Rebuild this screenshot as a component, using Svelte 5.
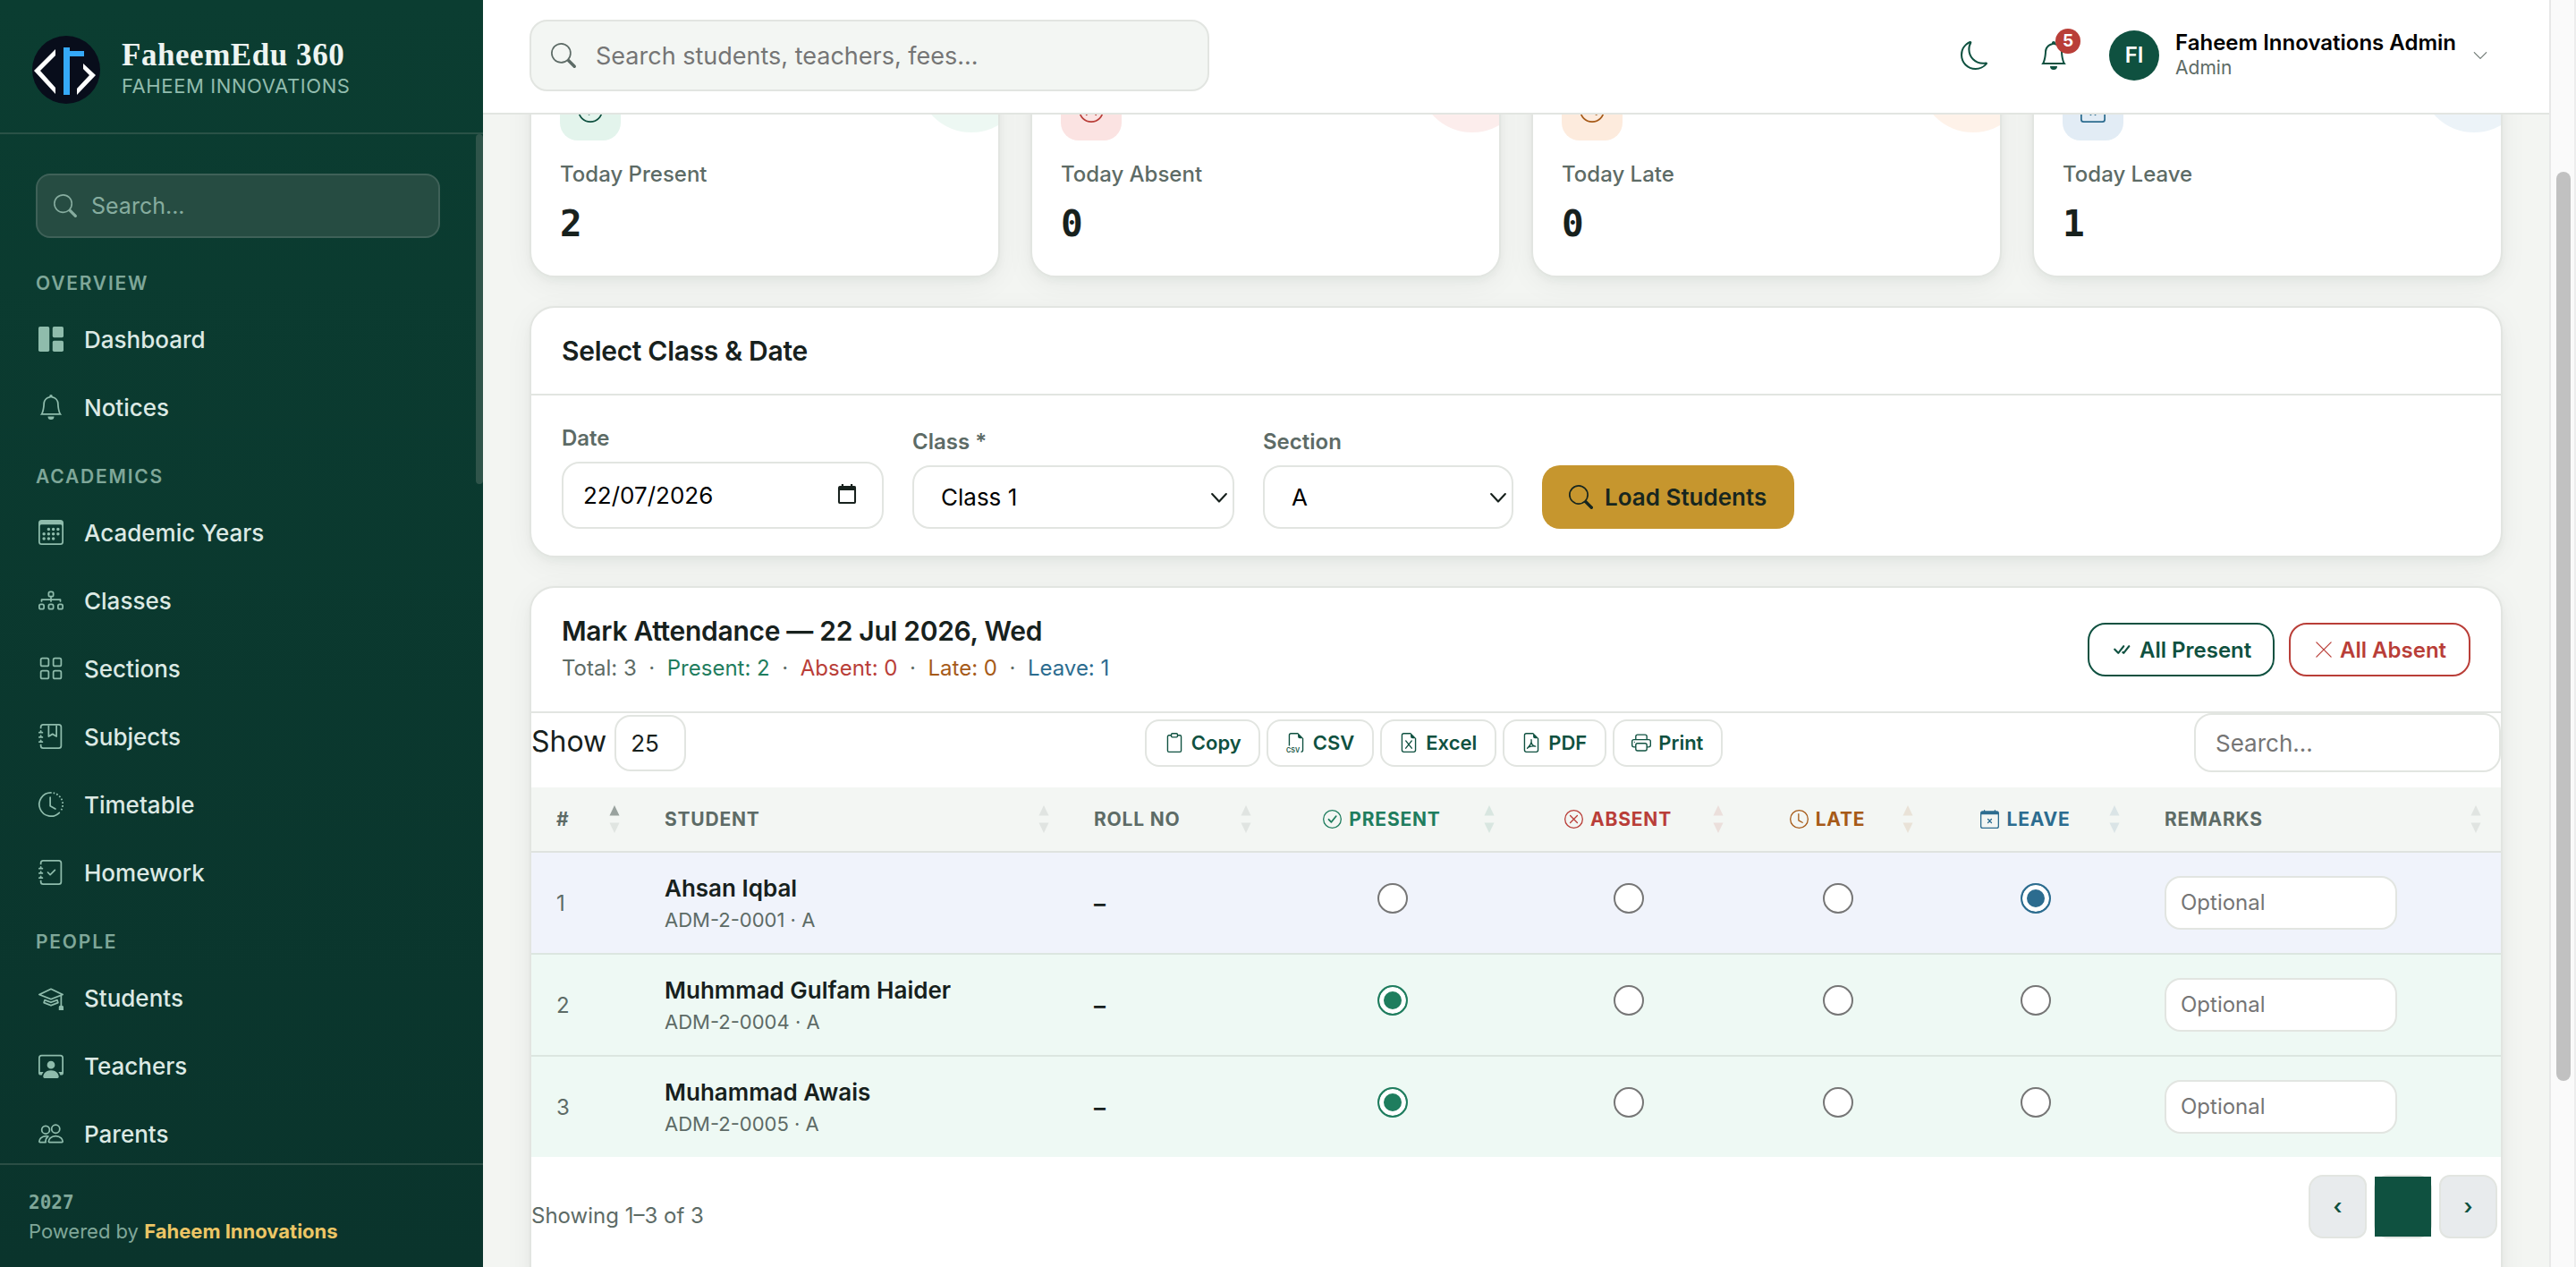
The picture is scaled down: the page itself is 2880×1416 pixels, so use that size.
<script>
  // icon bodies, all on a 16x16 grid
  const file = '<path d="M14 14V4.5L9.5 0H4a2 2 0 0 0-2 2v12a2 2 0 0 0 2 2h8a2 2 0 0 0 2-2M9.5 3A1.5 1.5 0 0 0 11 4.5h2V14a1 1 0 0 1-1 1H4a1 1 0 0 1-1-1V2a1 1 0 0 1 1-1h5.5z"/>';
  const journal = '<path d="M3 0h10a2 2 0 0 1 2 2v12a2 2 0 0 1-2 2H3a2 2 0 0 1-2-2v-1h1v1a1 1 0 0 0 1 1h10a1 1 0 0 0 1-1V2a1 1 0 0 0-1-1H3a1 1 0 0 0-1 1v1H1V2a2 2 0 0 1 2-2"/><path d="M1 5v-.5a.5.5 0 0 1 1 0V5h.5a.5.5 0 0 1 0 1h-2a.5.5 0 0 1 0-1zm0 3v-.5a.5.5 0 0 1 1 0V8h.5a.5.5 0 0 1 0 1h-2a.5.5 0 0 1 0-1zm0 3v-.5a.5.5 0 0 1 1 0v.5h.5a.5.5 0 0 1 0 1h-2a.5.5 0 0 1 0-1z"/>';
  const line = 'fill="none" stroke="currentColor" stroke-linecap="round" stroke-linejoin="round"';

  const icons = {
    search: '<path d="M11.742 10.344a6.5 6.5 0 1 0-1.397 1.398h-.001q.044.06.098.115l3.85 3.85a1 1 0 0 0 1.415-1.414l-3.85-3.85a1 1 0 0 0-.115-.1zM12 6.5a5.5 5.5 0 1 1-11 0 5.5 5.5 0 0 1 11 0"/>',
    bell: '<path d="M8 16a2 2 0 0 0 2-2H6a2 2 0 0 0 2 2M8 1.918l-.797.161A4 4 0 0 0 4 6c0 .628-.134 2.197-.459 3.742-.16.767-.376 1.566-.663 2.258h10.244c-.287-.692-.502-1.49-.663-2.258C12.134 8.197 12 6.628 12 6a4 4 0 0 0-3.203-3.92zM14.22 12c.223.447.481.801.78 1H1c.299-.199.557-.553.78-1C2.68 10.2 3 6.88 3 6c0-2.42 1.72-4.44 4.005-4.901a1 1 0 1 1 1.99 0A5 5 0 0 1 13 6c0 .88.32 4.2 1.22 6"/>',
    dashboard: '<rect width="7" height="16" rx="1"/><rect x="9" width="7" height="7" rx="1"/><rect x="9" y="9" width="7" height="7" rx="1"/>',
    calendar: '<path d="M14 0H2a2 2 0 0 0-2 2v12a2 2 0 0 0 2 2h12a2 2 0 0 0 2-2V2a2 2 0 0 0-2-2M1 3.857C1 3.384 1.448 3 2 3h12c.552 0 1 .384 1 .857v10.286c0 .473-.448.857-1 .857H2c-.552 0-1-.384-1-.857z"/><path d="M6.5 7a1 1 0 1 0 0-2 1 1 0 0 0 0 2m3 0a1 1 0 1 0 0-2 1 1 0 0 0 0 2m3 0a1 1 0 1 0 0-2 1 1 0 0 0 0 2m-9 3a1 1 0 1 0 0-2 1 1 0 0 0 0 2m3 0a1 1 0 1 0 0-2 1 1 0 0 0 0 2m3 0a1 1 0 1 0 0-2 1 1 0 0 0 0 2m3 0a1 1 0 1 0 0-2 1 1 0 0 0 0 2m-9 3a1 1 0 1 0 0-2 1 1 0 0 0 0 2m3 0a1 1 0 1 0 0-2 1 1 0 0 0 0 2m3 0a1 1 0 1 0 0-2 1 1 0 0 0 0 2"/>',
    diagram: `<g ${line}><rect x="6.5" y="2.5" width="3" height="3" rx="1"/><rect x=".5" y="10.5" width="3" height="3" rx="1"/><rect x="6.5" y="10.5" width="3" height="3" rx="1"/><rect x="12.5" y="10.5" width="3" height="3" rx="1"/><path d="M8 5.5v3M2 8.5v-1h12v1"/></g>`,
    grid: `<g ${line}><rect x="1.5" y="1.5" width="5" height="5" rx="1"/><rect x="9.5" y="1.5" width="5" height="5" rx="1"/><rect x="1.5" y="9.5" width="5" height="5" rx="1"/><rect x="9.5" y="9.5" width="5" height="5" rx="1"/></g>`,
    bookmark: journal + '<path d="M6 8V1h1v6.117L8.743 6.07a.5.5 0 0 1 .514 0L11 7.117V1h1v7a.5.5 0 0 1-.757.429L9 7.083 6.757 8.43A.5.5 0 0 1 6 8"/>',
    homework: journal + '<path d="M10.854 6.146a.5.5 0 0 1 0 .708l-3 3a.5.5 0 0 1-.708 0l-1.5-1.5a.5.5 0 1 1 .708-.708L7.5 8.793l2.646-2.647a.5.5 0 0 1 .708 0"/>',
    history: `<g ${line}><path d="M8 .5A7.5 7.5 0 1 0 13.3 13.3M7.5 3.5V9l3.3 1.9"/><path d="M9.5.65A7.5 7.5 0 0 1 14.3 12.1" stroke-dasharray="1 1.15" stroke-linecap="butt"/></g>`,
    students: '<path d="M8.211 2.047a.5.5 0 0 0-.422 0l-7.5 3.5a.5.5 0 0 0 .025.917l7.5 3a.5.5 0 0 0 .372 0L14 7.14V13a1 1 0 0 0-1 1v2h3v-2a1 1 0 0 0-1-1V6.739l.686-.275a.5.5 0 0 0 .025-.917zM8 8.46 1.758 5.965 8 3.052l6.242 2.913z"/><path d="M4.176 9.032a.5.5 0 0 0-.656.327l-.5 1.7a.5.5 0 0 0 .294.605l4.5 1.8a.5.5 0 0 0 .372 0l4.5-1.8a.5.5 0 0 0 .294-.605l-.5-1.7a.5.5 0 0 0-.656-.327L8 10.466zm-.068 1.873.22-.748 3.496 1.311a.5.5 0 0 0 .352 0l3.496-1.311.22.748L8 12.46z"/>',
    teachers: '<path d="M4 16s-1 0-1-1 1-4 5-4 5 3 5 4-1 1-1 1zm4-5.95a2.5 2.5 0 1 0 0-5 2.5 2.5 0 0 0 0 5"/><path d="M2 1a2 2 0 0 0-2 2v9.5A1.5 1.5 0 0 0 1.5 14h.653a5.4 5.4 0 0 1 1.066-2H1V3a1 1 0 0 1 1-1h12a1 1 0 0 1 1 1v9h-2.219c.554.654.89 1.373 1.066 2h.653a1.5 1.5 0 0 0 1.5-1.5V3a2 2 0 0 0-2-2z"/>',
    parents: `<g ${line}><circle cx="11" cy="5" r="2.6"/><path d="M7 13.5c-.4 0-.5-.2-.5-.5 0-1.2 1.3-3.5 4.5-3.5s4.5 2.3 4.5 3.5c0 .3-.1.5-.5.5z"/><circle cx="4.6" cy="5.5" r="2.5"/><path d="M4.6 13.5H1c-.4 0-.5-.2-.5-.5 0-1.2 1.2-3.5 4.5-3.5.6 0 1 .1 1.2.2-1.2.9-1.9 2.3-1.6 3.8z"/></g>`,
    moon: '<path d="M6 .278a.77.77 0 0 1 .08.858 7.2 7.2 0 0 0-.878 3.46c0 4.021 3.278 7.277 7.318 7.277q.792-.001 1.533-.16a.79.79 0 0 1 .81.316.73.73 0 0 1-.031.893A8.35 8.35 0 0 1 8.344 16C3.734 16 0 12.286 0 7.71 0 4.266 2.114 1.312 5.124.06A.75.75 0 0 1 6 .278M4.858 1.311A7.27 7.27 0 0 0 1.025 7.71c0 4.02 3.279 7.276 7.319 7.276a7.32 7.32 0 0 0 5.205-2.162q-.506.063-1.029.063c-4.61 0-8.343-3.714-8.343-8.29 0-1.167.242-2.278.681-3.286"/>',
    down: `<path ${line} d="m2 5 6 6 6-6"/>`,
    caret: `<path ${line} stroke-width="1.9" d="m1 4.5 7 7.5 7-7.5"/>`,
    date: '<path fill-rule="evenodd" d="M3.5 0h1.6v1.5h5.8V0h1.6v1.5H14A1.3 1.3 0 0 1 15.3 3v11.5A1.5 1.5 0 0 1 14 16H2A1.5 1.5 0 0 1 .7 14.5V3A1.5 1.5 0 0 1 2 1.5h1.5zM2.2 5v9.5h11.6V5z"/>',
    copy: `<g ${line}><path d="M5 2H3.5A1 1 0 0 0 2.5 3v11.5a1 1 0 0 0 1 1h9a1 1 0 0 0 1-1V3a1 1 0 0 0-1-1H11"/><rect x="5.5" y=".5" width="5" height="3" rx=".8"/></g>`,
    csv: '<path d="M14 4.5V14a2 2 0 0 1-2 2v-1a1 1 0 0 0 1-1V4.5h-2A1.5 1.5 0 0 1 9.5 3V1H4a1 1 0 0 0-1 1v8.5H2V2a2 2 0 0 1 2-2h5.5z"/><text x="0" y="15.9" font-family="Inter, sans-serif" font-size="5.2" font-weight="600">CSV</text>',
    excel: file + `<path ${line} d="m5.6 6.5 4.8 6M10.4 6.5l-4.8 6"/>`,
    pdf: file + `<path ${line} d="M8 5.6c.5 2.2-.8 4.7-3.2 7M8 7.5c.4 1.9 1.5 3.2 3.4 3.5-1.8-.4-3.6-.1-5.4.6"/>`,
    print: '<path d="M2.5 8a.5.5 0 1 0 0-1 .5.5 0 0 0 0 1"/><path d="M5 1a2 2 0 0 0-2 2v2H2a2 2 0 0 0-2 2v3a2 2 0 0 0 2 2h1v1a2 2 0 0 0 2 2h6a2 2 0 0 0 2-2v-1h1a2 2 0 0 0 2-2V7a2 2 0 0 0-2-2h-1V3a2 2 0 0 0-2-2zM4 3a1 1 0 0 1 1-1h6a1 1 0 0 1 1 1v2H4zm1 5a2 2 0 0 0-2 2v1H2a1 1 0 0 1-1-1V7a1 1 0 0 1 1-1h12a1 1 0 0 1 1 1v3a1 1 0 0 1-1 1h-1v-1a2 2 0 0 0-2-2zm7 2v3a1 1 0 0 1-1 1H5a1 1 0 0 1-1-1v-3a1 1 0 0 1 1-1h6a1 1 0 0 1 1 1"/>',
    checkAll: '<path d="M8.97 4.97a.75.75 0 0 1 1.07 1.05l-3.99 4.99a.75.75 0 0 1-1.08.02L2.324 8.384a.75.75 0 1 1 1.06-1.06l2.094 2.093L8.95 4.992zm-.92 5.14.92.92a.75.75 0 0 0 1.079-.02l3.992-4.99a.75.75 0 1 0-1.091-1.028L9.477 9.417l-.485-.486z"/>',
    x: `<path ${line} d="M1.5 1.5l13 13M14.5 1.5l-13 13"/>`,
    present: `<g ${line}><circle cx="8" cy="8" r="7.5"/><path stroke-width="1.4" d="m5 8.2 2.2 2.3 4-5"/></g>`,
    absent: `<g ${line}><circle cx="8" cy="8" r="7.5"/><path d="m5 5 6 6M11 5l-6 6"/></g>`,
    late: `<g ${line}><circle cx="8" cy="8" r="7.5"/><path d="M7.5 3.5V9l3.3 1.9"/></g>`,
    leave: `<path fill-rule="evenodd" d="M3.5 0a.5.5 0 0 1 .5.5V1h8V.5a.5.5 0 0 1 1 0V1h1a2 2 0 0 1 2 2v11a2 2 0 0 1-2 2H2a2 2 0 0 1-2-2V3a2 2 0 0 1 2-2h1V.5a.5.5 0 0 1 .5-.5M1 4v10a1 1 0 0 0 1 1h12a1 1 0 0 0 1-1V4z"/><path ${line} d="m6.5 8 3 3M9.5 8l-3 3"/>`,
  };

  const menu = [
    { title: 'Overview', items: [['dashboard', 'Dashboard'], ['bell', 'Notices']] },
    {
      title: 'Academics',
      items: [
        ['calendar', 'Academic Years'],
        ['diagram', 'Classes'],
        ['grid', 'Sections'],
        ['bookmark', 'Subjects'],
        ['history', 'Timetable'],
        ['homework', 'Homework'],
      ],
    },
    { title: 'People', items: [['students', 'Students'], ['teachers', 'Teachers'], ['parents', 'Parents']] },
  ];

  const stats = [
    { kind: 'present', label: 'Today Present', value: 2 },
    { kind: 'absent', label: 'Today Absent', value: 0 },
    { kind: 'late', label: 'Today Late', value: 0 },
    { kind: 'leave', label: 'Today Leave', value: 1 },
  ];

  const exports = [['copy', 'Copy'], ['csv', 'CSV'], ['excel', 'Excel'], ['pdf', 'PDF'], ['print', 'Print']];
  const statuses = ['present', 'absent', 'late', 'leave'];

  let students = $state([
    { name: 'Ahsan Iqbal', adm: 'ADM-2-0001', section: 'A', status: 'leave' },
    { name: 'Muhmmad Gulfam Haider', adm: 'ADM-2-0004', section: 'A', status: 'present' },
    { name: 'Muhammad Awais', adm: 'ADM-2-0005', section: 'A', status: 'present' },
  ]);

  const count = (status) => students.filter((s) => s.status === status).length;

  function markAll(status) {
    for (const s of students) s.status = status;
  }
</script>

{#snippet icon(name)}
  <svg class="icon" viewBox="0 0 16 16" fill="currentColor">{@html icons[name]}</svg>
{/snippet}

{#snippet sort(active)}
  <svg class="sort" class:active viewBox="0 0 12 32" fill="currentColor">
    <path class="up" d="M6 0l5.5 11.5H.5z" />
    <path class="dn" d="M6 31L.5 19.5h11z" />
  </svg>
{/snippet}

<div class="app">
  <aside>
    <div class="brand">
      <svg class="logo" viewBox="0 0 76 76">
        <circle cx="38" cy="38" r="38" fill="#080d1b" />
        <path d="M26 15v7L9 39l17 19v7L2 39z" fill="#fff" />
        <path d="M35 13h7v4h16v6H42v43h-7z" fill="#35a9f8" />
        <path d="M57 31l14 13-21 22v-7l14-15-7-7z" fill="#fff" />
      </svg>
      <div>
        <div class="brand-name">FaheemEdu 360</div>
        <div class="brand-sub">FAHEEM INNOVATIONS</div>
      </div>
    </div>
    <div class="nav-wrap">
      <nav>
        <label class="side-search">
          {@render icon('search')}
          <input placeholder="Search..." />
        </label>
        {#each menu as group}
          <h6>{group.title}</h6>
          {#each group.items as [name, label]}
            <a href="#{name}">{@render icon(name)}<span>{label}</span></a>
          {/each}
        {/each}
      </nav>
      <div class="nav-thumb"></div>
    </div>
    <div class="side-foot">
      <div class="year">2027</div>
      <div>Powered by <strong>Faheem Innovations</strong></div>
    </div>
  </aside>

  <div class="page">
    <header>
      <label class="top-search">
        {@render icon('search')}
        <input placeholder="Search students, teachers, fees..." />
      </label>
      <div class="moon">{@render icon('moon')}</div>
      <div class="notif">{@render icon('bell')}<span class="badge">5</span></div>
      <div class="avatar">FI</div>
      <div class="user">
        <div class="user-name">Faheem Innovations Admin</div>
        <div class="user-role">Admin</div>
      </div>
      <div class="chev">{@render icon('down')}</div>
    </header>

    <main>
      <div class="stats">
        {#each stats as s}
          <div class="stat {s.kind}">
            <div class="stat-icon">{@render icon(s.kind)}</div>
            <div class="stat-label">{s.label}</div>
            <div class="stat-value">{s.value}</div>
          </div>
        {/each}
      </div>

      <section class="card filter">
        <h2>Select Class &amp; Date</h2>
        <div class="fields">
          <div class="field">
            <span>Date</span>
            <label class="control date"><input value="22/07/2026" />{@render icon('date')}</label>
          </div>
          <div class="field">
            <span>Class *</span>
            <label class="control pick"><select><option>Class 1</option></select>{@render icon('caret')}</label>
          </div>
          <div class="field small">
            <span>Section</span>
            <label class="control pick"><select><option>A</option></select>{@render icon('caret')}</label>
          </div>
          <button class="load">{@render icon('search')}Load Students</button>
        </div>
      </section>

      <section class="card marks">
        <div class="marks-head">
          <div>
            <h3>Mark Attendance — 22 Jul 2026, Wed</h3>
            <div class="totals">
              <span>Total: {students.length}</span><i>·</i>
              <span class="c-present">Present: {count('present')}</span><i>·</i>
              <span class="c-absent">Absent: {count('absent')}</span><i>·</i>
              <span class="c-late">Late: {count('late')}</span><i>·</i>
              <span class="c-leave">Leave: {count('leave')}</span>
            </div>
          </div>
          <div class="bulk">
            <button class="all-present" onclick={() => markAll('present')}>{@render icon('checkAll')}All Present</button>
            <button class="all-absent" onclick={() => markAll('absent')}>{@render icon('x')}All Absent</button>
          </div>
        </div>

        <div class="tools">
          <div class="show">Show <span class="len">25</span></div>
          <div class="exports">
            {#each exports as [name, label]}
              <button>{@render icon(name)}{label}</button>
            {/each}
          </div>
          <div class="find"><input placeholder="Search..." /></div>
        </div>

        <table>
          <colgroup>
            <col class="w-num" /><col class="w-student" /><col class="w-roll" /><col class="w-present" />
            <col class="w-absent" /><col class="w-late" /><col class="w-leave" /><col />
          </colgroup>
          <thead>
            <tr>
              <th><div class="th"><span>#</span>{@render sort(true)}</div></th>
              <th><div class="th"><span>Student</span>{@render sort(false)}</div></th>
              <th><div class="th"><span>Roll No</span>{@render sort(false)}</div></th>
              {#each statuses as status}
                <th>
                  <div class="th mid c-{status}"><span>{@render icon(status)}{status}</span>{@render sort(false)}</div>
                </th>
              {/each}
              <th><div class="th"><span>Remarks</span>{@render sort(false)}</div></th>
            </tr>
          </thead>
          <tbody>
            {#each students as s, i}
              <tr class="row-{s.status}">
                <td class="num">{i + 1}</td>
                <td>
                  <div class="name">{s.name}</div>
                  <div class="adm">{s.adm} · {s.section}</div>
                </td>
                <td class="roll">–</td>
                {#each statuses as status}
                  <td class="radio c-{status}">
                    <input type="radio" name="st{i}" value={status} bind:group={s.status} />
                  </td>
                {/each}
                <td><input class="remark" placeholder="Optional" /></td>
              </tr>
            {/each}
          </tbody>
        </table>

        <div class="table-foot">
          <div>Showing 1–3 of 3</div>
          <div class="pager">
            <span class="pg prev">‹</span>
            <span class="pg cur"><b></b></span>
            <span class="pg next">›</span>
          </div>
        </div>
      </section>
    </main>
  </div>

  <div class="scrollbar"><div class="thumb"></div></div>
</div>

<style>
  :global(body) {
    margin: 0;
    overflow: hidden;
  }

  .app {
    display: flex;
    width: 2880px;
    height: 1416px;
    overflow: hidden;
    background: #f3f5f2;
    color: #17211d;
    font-family: Inter, "Liberation Sans", sans-serif;
    font-size: 26px;
  }

  .app * {
    box-sizing: border-box;
  }

  .icon {
    display: block;
    flex: none;
    width: 28px;
    height: 28px;
    overflow: visible;
  }

  input,
  select,
  button {
    font-family: inherit;
    margin: 0;
  }

  label input,
  select {
    flex: 1;
    min-width: 0;
    padding: 0;
    border: 0;
    outline: none;
    background: none;
    appearance: none;
  }

  /* sidebar */
  aside {
    display: flex;
    flex-direction: column;
    flex: none;
    width: 540px;
    background: linear-gradient(180deg, #0b3d31, #0a342c);
    color: #dce9e4;
  }

  .brand {
    display: flex;
    gap: 24px;
    height: 150px;
    padding: 40px 36px 0;
    border-bottom: 2px solid #2a5247;
  }

  .logo {
    width: 76px;
    height: 76px;
  }

  .brand-name {
    margin-top: 3px;
    font-family: "Liberation Serif", serif;
    font-size: 35px;
    font-weight: 700;
    line-height: 38px;
    letter-spacing: 0.55px;
    color: #eef4f1;
  }

  .brand-sub {
    margin-top: 1px;
    font-size: 22px;
    line-height: 28px;
    letter-spacing: 0.6px;
    color: #92bcae;
  }

  .nav-wrap {
    display: flex;
    flex: 1;
    min-height: 0;
    overflow: hidden;
  }

  nav {
    flex: 1;
    min-width: 0;
    padding: 44px 40px 0;
  }

  .nav-thumb {
    flex: none;
    width: 8px;
    height: 391px;
    border-radius: 4px;
    background: #2f544a;
  }

  .side-search {
    display: flex;
    align-items: center;
    gap: 16px;
    height: 72px;
    padding: 0 18px;
    border: 2px solid #3f6158;
    border-radius: 16px;
    background: #264c42;
    color: #86ac9f;
  }

  .side-search .icon {
    width: 26px;
    height: 26px;
  }

  .side-search input {
    font-size: 25px;
    color: #fff;
  }

  .side-search input::placeholder {
    color: #86ac9f;
    opacity: 1;
  }

  h6 {
    margin: 0;
    padding-top: 39px;
    height: 75px;
    font-size: 21px;
    font-weight: 600;
    line-height: 24px;
    letter-spacing: 1.8px;
    text-transform: uppercase;
    color: #7fa799;
  }

  h6:not(:nth-child(2)) {
    height: 64px;
    padding-top: 28px;
  }

  a {
    display: flex;
    align-items: center;
    gap: 23px;
    height: 76px;
    padding-left: 3px;
    font-size: 26px;
    font-weight: 500;
    color: #dce9e4;
    text-decoration: none;
  }

  a .icon {
    color: #8fbcac;
  }

  .side-foot {
    height: 116px;
    padding: 26px 32px 0;
    border-top: 2px solid #2b4e45;
    font-size: 22px;
    line-height: 32px;
    color: #80a799;
  }

  .year {
    font-family: "DejaVu Sans Mono", monospace;
    font-size: 21px;
    font-weight: 700;
  }

  .side-foot strong {
    font-weight: 700;
    color: #ecc565;
  }

  /* top bar */
  .page {
    display: flex;
    flex-direction: column;
    flex: none;
    width: 2310px;
    height: 1416px;
    overflow: hidden;
  }

  header {
    display: flex;
    flex: none;
    align-items: center;
    height: 128px;
    padding: 0 68px 2px 52px;
    border-bottom: 2px solid #e2e5e1;
    background: #fff;
    color: #0f5140;
  }

  .top-search {
    display: flex;
    align-items: center;
    gap: 22px;
    width: 760px;
    height: 80px;
    margin-right: auto;
    padding: 0 22px;
    border: 2px solid #e2e5e1;
    border-radius: 20px;
    background: #f3f6f3;
    color: #5d6b66;
  }

  .top-search input {
    font-size: 27px;
  }

  .top-search input::placeholder {
    color: #757575;
  }

  .moon .icon,
  .notif .icon {
    width: 32px;
    height: 32px;
  }

  .notif {
    position: relative;
    margin: 0 46px 0 56px;
  }

  .badge {
    position: absolute;
    top: -14px;
    right: -14px;
    width: 28px;
    height: 28px;
    border-radius: 50%;
    background: #b93e38;
    color: #fff;
    font-size: 19px;
    font-weight: 700;
    line-height: 28px;
    text-align: center;
  }

  .avatar {
    width: 56px;
    height: 56px;
    margin-right: 18px;
    border-radius: 50%;
    background: #0f5140;
    color: #fff;
    font-size: 24px;
    font-weight: 600;
    line-height: 56px;
    text-align: center;
  }

  .user-name {
    font-size: 24px;
    font-weight: 600;
    line-height: 30px;
    color: #000;
  }

  .user-role {
    font-size: 21px;
    line-height: 26px;
    margin-bottom: 2px;
    color: #5d6b66;
  }

  .chev {
    margin-left: 18px;
    color: #6c7672;
  }

  .chev .icon {
    width: 18px;
    height: 18px;
  }

  main {
    flex: 1;
    min-height: 0;
    padding: 0 52px;
    overflow: hidden;
  }

  /* stat cards, scrolled partly under the top bar */
  .stats {
    display: grid;
    grid-template-columns: repeat(4, 1fr);
    gap: 34px;
    margin-top: -74px;
  }

  .stat {
    position: relative;
    height: 256px;
    padding: 33px 32px;
    border: 2px solid #e2e5e1;
    border-radius: 28px;
    background: #fff;
    box-shadow: 0 4px 8px rgba(16, 40, 30, 0.04), 0 8px 32px rgba(16, 40, 30, 0.05);
    overflow: hidden;
  }

  .stat::after {
    content: "";
    position: absolute;
    top: -28px;
    right: -30px;
    width: 120px;
    height: 120px;
    border-radius: 50%;
    background: var(--soft);
    opacity: 0.65;
  }

  .stat-icon {
    display: grid;
    place-items: center;
    width: 68px;
    height: 68px;
    border-radius: 20px;
    background: var(--soft);
    color: var(--tone);
  }

  .stat.present { --soft: #e3f4ec; --tone: #0f5140; }
  .stat.absent { --soft: #fbe3e2; --tone: #b93e38; }
  .stat.late { --soft: #fdebdd; --tone: #a65a18; }
  .stat.leave { --soft: #e2ecf5; --tone: #2c6c8f; }

  .stat-label {
    margin-top: 22px;
    font-size: 24px;
    font-weight: 500;
    line-height: 32px;
    color: #5d6b66;
  }

  .stat-value {
    margin-top: 13px;
    font-family: "DejaVu Sans Mono", monospace;
    font-size: 41px;
    font-weight: 700;
    line-height: 52px;
  }

  .card {
    border: 2px solid #e2e5e1;
    border-radius: 28px;
    background: #fff;
    box-shadow: 0 4px 8px rgba(16, 40, 30, 0.04), 0 8px 32px rgba(16, 40, 30, 0.05);
  }

  .filter {
    height: 281px;
    margin-top: 32px;
  }

  h2,
  h3 {
    margin: 0;
    font-size: 30px;
    font-weight: 600;
    letter-spacing: -0.3px;
  }

  h2 {
    height: 98px;
    padding-left: 34px;
    border-bottom: 2px solid #e2e5e1;
    line-height: 97px;
  }

  .fields {
    display: flex;
    align-items: flex-end;
    gap: 32px;
    height: 149px;
    padding: 0 34px;
  }

  .field {
    width: 360px;
  }

  .field.small {
    width: 280px;
  }

  .field span {
    display: block;
    margin-bottom: 10px;
    font-size: 24px;
    font-weight: 600;
    line-height: 32px;
    color: #5d6b66;
  }

  .control {
    display: flex;
    align-items: center;
    height: 71px;
    border: 2px solid #e2e5e1;
    border-radius: 20px;
    background: #fff;
  }

  .control input,
  .control select {
    font-size: 26px;
    color: #000;
  }

  .date {
    height: 75px;
    padding: 0 28px 0 22px;
  }

  .date .icon {
    width: 22px;
    height: 22px;
    margin-bottom: 4px;
  }

  .pick {
    padding: 0 6px 0 30px;
  }

  .pick .icon {
    width: 18px;
    height: 18px;
  }

  button {
    display: flex;
    align-items: center;
    background: #fff;
    font-weight: 600;
  }

  .load {
    gap: 13px;
    width: 282px;
    height: 71px;
    padding: 0 30px;
    border: 0;
    border-radius: 20px;
    background: #c6962e;
    color: #17261f;
    font-size: 26px;
    white-space: nowrap;
  }

  .load .icon {
    width: 27px;
    height: 27px;
  }

  .marks {
    height: 800px;
    margin-top: 32px;
  }

  .marks-head {
    display: flex;
    align-items: center;
    justify-content: space-between;
    height: 140px;
    padding: 0 34px;
    border-bottom: 2px solid #e2e5e1;
  }

  .marks-head h3 {
    line-height: 41px;
  }

  .totals {
    display: flex;
    font-size: 24px;
    line-height: 41px;
    color: #5d6b66;
  }

  .totals i {
    width: 34px;
    font-style: normal;
    text-align: center;
  }

  .c-present { --tone: #1f7d5e; color: #1f7d5e; }
  .c-absent { --tone: #b93e38; color: #b93e38; }
  .c-late { --tone: #a65a18; color: #a65a18; }
  .c-leave { --tone: #2c6c8f; color: #2c6c8f; }

  .bulk {
    display: flex;
    gap: 16px;
  }

  .bulk button {
    gap: 8px;
    height: 60px;
    border: 2px solid;
    border-radius: 20px;
    font-size: 24px;
    white-space: nowrap;
  }

  .all-present {
    width: 209px;
    padding: 0 0 0 24px;
    color: #0f5140;
  }

  .all-absent {
    width: 203px;
    padding: 0 0 0 27px;
    color: #b93e38;
  }

  .bulk .icon {
    width: 24px;
    height: 24px;
  }

  .all-absent .icon {
    width: 20px;
    height: 20px;
  }

  .tools {
    display: flex;
    align-items: flex-start;
    justify-content: space-between;
    height: 83px;
  }

  .show {
    display: flex;
    gap: 9px;
    padding-top: 2px;
    font-size: 32px;
    line-height: 60px;
  }

  .len {
    width: 80px;
    height: 63px;
    padding-left: 16px;
    border: 2px solid #e2e5e1;
    border-radius: 18px;
    font-size: 26px;
    line-height: 59px;
  }

  .exports {
    display: flex;
    gap: 7px;
    padding-top: 7px;
    margin-right: 14px;
  }

  .exports button {
    gap: 8px;
    height: 53px;
    padding: 0 19.5px 1px;
    border: 2px solid #e2e5e1;
    border-radius: 16px;
    color: #0f5140;
    font-size: 22px;
  }

  .exports .icon {
    width: 22px;
    height: 22px;
  }

  .find input {
    display: block;
    width: 343px;
    height: 66px;
    padding: 0 22px;
    border: 2px solid #e2e5e1;
    border-radius: 20px;
    font-size: 26px;
  }

  table {
    width: 100%;
    border-collapse: separate;
    border-spacing: 0;
    table-layout: fixed;
  }

  .w-num { width: 121px; }
  .w-student { width: 480px; }
  .w-roll { width: 226px; }
  .w-present { width: 272px; }
  .w-absent { width: 256px; }
  .w-late { width: 212px; }
  .w-leave { width: 231px; }

  th {
    height: 73px;
    padding: 0 22px 0 28px;
    border-bottom: 2px solid #dfe3df;
    background: #f3f6f3;
    color: #5d6b66;
    text-align: left;
  }

  .th {
    display: flex;
    align-items: center;
    justify-content: space-between;
    font-size: 21px;
    font-weight: 700;
    letter-spacing: 0.8px;
    text-transform: uppercase;
  }

  .th span {
    display: flex;
    align-items: center;
    gap: 8px;
  }

  .mid span {
    margin: 0 auto;
    transform: translateX(-9px);
  }

  .th .icon {
    width: 21px;
    height: 21px;
  }

  .sort {
    flex: none;
    width: 12px;
    height: 32px;
    opacity: 0.12;
  }

  .sort.active {
    opacity: 1;
  }

  .sort.active .up {
    opacity: 0.6;
  }

  .sort.active .dn {
    opacity: 0.12;
  }

  td {
    height: 114px;
    padding: 0 28px;
    border-bottom: 2px solid #dce6e0;
  }

  tbody tr:last-child td {
    height: 112px;
    border-bottom: 0;
  }

  .row-present { background: #eef9f4; }
  .row-leave { background: #f0f3fb; }
  .row-absent { background: #fcf0ef; }
  .row-late { background: #fdf5ec; }

  .num {
    font-size: 24px;
    color: #5d6b66;
  }

  .name {
    padding-top: 1px;
    font-weight: 600;
    line-height: 36px;
  }

  .adm {
    font-size: 22px;
    line-height: 34px;
    color: #5d6b66;
  }

  .roll {
    font-weight: 600;
  }

  .radio {
    text-align: center;
  }

  .radio.c-leave {
    padding-right: 29px;
  }

  .radio input {
    display: block;
    width: 34px;
    height: 34px;
    margin: 0 auto 10px;
    border: 2px solid #767676;
    border-radius: 50%;
    background: #fff;
    appearance: none;
  }

  .radio input:checked {
    border-color: var(--tone);
    background: var(--tone);
    box-shadow: inset 0 0 0 5px #fff;
  }

  .remark {
    display: block;
    width: 260px;
    height: 60px;
    padding: 0 16px 1px;
    border: 2px solid #e2e5e1;
    border-radius: 18px;
    background: #fff;
    font-size: 24px;
  }

  .table-foot {
    display: flex;
    justify-content: space-between;
    padding: 20px 4px 0 0;
    font-size: 24px;
    line-height: 91px;
    color: #5d6b66;
  }

  .pager {
    display: flex;
    gap: 8px;
  }

  .pg {
    width: 65px;
    height: 71px;
    border: 2px solid #e2e5e1;
    border-radius: 16px;
    background: #e8ebed;
    color: #0f5140;
    font-size: 24px;
    font-weight: 600;
    line-height: 68px;
    text-align: center;
  }

  .prev {
    border-radius: 16px 12px 12px 16px;
  }

  .next {
    border-radius: 12px 16px 16px 12px;
  }

  .cur b {
    display: block;
    height: 67px;
    margin: 0 -1px;
    background: #0f5140;
  }

  .scrollbar {
    flex: 1;
    padding: 192px 4px 0 6px;
    border-left: 2px solid #e8e8e8;
    border-right: 2px solid #ededed;
    background: #fafafa;
  }

  .thumb {
    width: 16px;
    height: 1016px;
    border-radius: 8px;
    background: #c1c1c1;
  }
</style>
